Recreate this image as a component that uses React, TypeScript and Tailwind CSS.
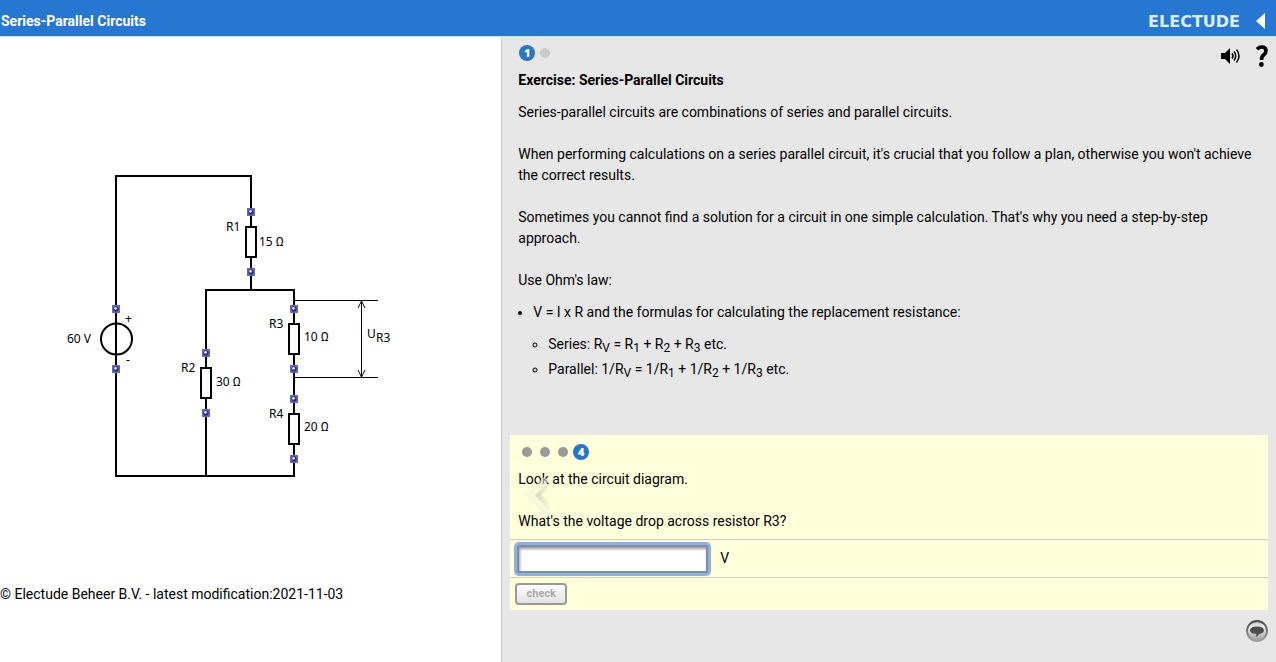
import { useState } from "react";
import type { ReactNode } from "react";

type Point = { x: number; y: number };

type Part = Point & { name: string; ohms: number; labelX: number; labelY: number };

const resistors: Part[] = [
  { name: "R1", ohms: 15, x: 251, y: 242, labelX: 259, labelY: 246 },
  { name: "R2", ohms: 30, x: 206, y: 383, labelX: 216, labelY: 386 },
  { name: "R3", ohms: 10, x: 294, y: 339, labelX: 304, labelY: 341 },
  { name: "R4", ohms: 20, x: 294, y: 429, labelX: 304, labelY: 431 },
];

function Terminal({ x, y }: Point) {
  return (
    <g>
      <rect x={x - 4} y={y - 4} width="8" height="8" fill="#6669b6" />
      <circle cx={x} cy={y} r="2.7" fill="#33336f" />
      <circle cx={x - 0.5} cy={y - 0.7} r="1.4" fill="#dcdff5" />
    </g>
  );
}

function Resistor({ x, y, name, ohms, labelX, labelY }: Part) {
  return (
    <g>
      <rect x={x - 5} y={y - 15} width="10" height="30" fill="#fff" stroke="#000" strokeWidth="2" />
      <Terminal x={x} y={y - 30} />
      <Terminal x={x} y={y + 30} />
      <text x={x - 25} y={y - 11}>
        {name}
      </text>
      <text x={labelX} y={labelY}>
        {ohms} <tspan className="font-[Roboto,sans-serif]">Ω</tspan>
      </text>
    </g>
  );
}

function CircuitDiagram() {
  return (
    <svg
      viewBox="0 37 500 547"
      className="h-[547px] w-[500px] max-w-none font-['Noto_Sans',sans-serif] text-xs"
      role="img"
      aria-label="Circuit diagram"
    >
      <g fill="none" stroke="#000" strokeWidth="2">
        <path d="M251 290V176H116V476H294V290H206V476" />
        <circle cx="116.500" cy="339" r="15.500" />
      </g>
      <g fill="none" stroke="#000" strokeWidth="1">
        <path d="M294 300.5H378M294 377.5H378M361.5 301V377" />
        <path d="M358 308L361.5 301L365 308M358 370L361.5 377L365 370" />
      </g>
      <Terminal x={116} y={309} />
      <Terminal x={116} y={369} />
      {resistors.map((r) => (
        <Resistor key={r.name} {...r} />
      ))}
      <text x="67" y="343">60 V</text>
      <text x="125" y="323">+</text>
      <text x="126" y="364">-</text>
      <text x="367" y="338">U</text>
      <text x="376" y="342">R3</text>
    </svg>
  );
}

function StepNumber({ children }: { children: ReactNode }) {
  return (
    <span className="flex size-4 items-center justify-center rounded-full bg-[#2a75c6] font-['Open_Sans',sans-serif] text-[11px] leading-4 font-extrabold text-white">
      {children}
    </span>
  );
}

function Sub({ children }: { children: ReactNode }) {
  return <span className="relative top-[3px] text-xs leading-none">{children}</span>;
}

function SpeakerIcon() {
  return (
    <svg viewBox="0 0 20 16" className="h-4 w-5">
      <path d="M0 5H4L9 0V16L4 11H0Z" />
      <g fill="none" stroke="#000" strokeWidth="1.5">
        <path d="M11 5.5Q13 8 11 10.5" />
        <path d="M13 3.5Q16.5 8 13 12.5" />
        <path d="M15.500 1.500Q20.500 8 15.500 14.500" />
      </g>
    </svg>
  );
}

function HelpIcon() {
  return (
    <svg viewBox="0 0 12 22" className="h-[22px] w-3">
      <path
        d="M1 4.200Q3 2 5.800 2Q10 2 10 5.800Q10 8 7.800 9.800Q5.500 11.500 5.500 15"
        fill="none"
        stroke="#000"
        strokeWidth="3.600"
      />
      <circle cx="5.400" cy="19.500" r="2.400" />
    </svg>
  );
}

function CommentIcon() {
  return (
    <svg viewBox="0 0 22 22" className="size-[22px]">
      <defs>
        <linearGradient id="ring" x1="0" y1="0" x2="0" y2="1">
          <stop offset="0" stopColor="#4a4a4a" />
          <stop offset="1" stopColor="#a0a0a0" />
        </linearGradient>
        <linearGradient id="face" x1="0" y1="0" x2="0" y2="1">
          <stop offset="0" stopColor="#b4b4b4" />
          <stop offset="0.3" stopColor="#f6f6f6" />
          <stop offset="0.55" stopColor="#d0d0d0" />
          <stop offset="1" stopColor="#9c9c9c" />
        </linearGradient>
      </defs>
      <circle cx="11" cy="11" r="10" fill="url(#face)" stroke="url(#ring)" strokeWidth="1.800" />
      <path
        d="M11 6.500C15 6.500 18 8 18 10.300C18 12.300 16 13.500 13 13.900Q12.500 16 9.800 17Q10.600 15.500 10.400 14C6.700 13.900 4 12.500 4 10.300C4 8 7 6.500 11 6.500Z"
        fill="#4d4d4d"
      />
    </svg>
  );
}

function PreviousIcon() {
  return (
    <svg viewBox="0 0 30 44" className="h-11 w-[30px]">
      <defs>
        <linearGradient id="shade" x1="0" y1="0" x2="1" y2="0">
          <stop offset="0" stopColor="#b0b098" stopOpacity="0.5" />
          <stop offset="1" stopColor="#b0b098" stopOpacity="0" />
        </linearGradient>
      </defs>
      <path d="M27 6L13 20L28 37L30 31L20 20L30 9Z" fill="url(#shade)" />
      <path d="M22 2L27 6L13 20L30 38L25 43L3 20Z" fill="#f2f2da" opacity="0.6" />
    </svg>
  );
}

export default function App() {
  const [answer, setAnswer] = useState("");

  return (
    <div className="flex min-h-screen flex-col bg-white font-[Roboto,sans-serif] text-sm leading-[21px] text-black">
      <header className="flex h-[37px] items-center justify-between border-b border-[#c9dff6] bg-[#2777d2] pt-1.5 pr-[11px] pl-px text-white">
        <h1 className="font-bold">Series-Parallel Circuits</h1>
        <div className="flex items-center gap-4">
          <span className="font-['DejaVu_Sans',sans-serif] text-base leading-[21px] font-bold text-[#dcefff]">
            ELECTUDE
          </span>
          <button type="button" aria-label="Open menu">
            <svg viewBox="0 0 9 16" className="h-4 w-[9px]">
              <path d="M9 0V16L0 8Z" fill="#fff" />
            </svg>
          </button>
        </div>
      </header>

      <div className="grid flex-1 grid-cols-[11fr_17fr]">
        <section className="overflow-hidden">
          <CircuitDiagram />
          <footer>© Electude Beheer B.V. - latest modification:2021-11-03</footer>
        </section>

        <main className="border-l border-[#c8c8c8] bg-[#e7e7e7] px-2 pt-2">
          <div className="flex h-[25px] items-start justify-between pl-[9px]">
            <div className="flex items-center gap-[5px]">
              <StepNumber>1</StepNumber>
              <span className="size-2.5 rounded-full bg-[#cacaca]" />
            </div>
            <div className="flex items-center gap-[15px]">
              <button type="button" aria-label="Read aloud">
                <SpeakerIcon />
              </button>
              <button type="button" aria-label="Help">
                <HelpIcon />
              </button>
            </div>
          </div>

          <div className="flex flex-col gap-[11px] px-2">
            <h2 className="font-bold">Exercise: Series-Parallel Circuits</h2>
            <p>
              Series-parallel circuits are combinations of series and parallel circuits.
              <br />
              <br />
              When performing calculations on a series parallel circuit, it's crucial that you
              follow a plan, otherwise you won't achieve the correct results.
              <br />
              <br />
              Sometimes you cannot find a solution for a circuit in one simple calculation. That's
              why you need a step-by-step approach.
              <br />
              <br />
              Use Ohm's law:
            </p>
            <ul className="list-disc pl-[15px]">
              <li>
                V = I x R and the formulas for calculating the replacement resistance:
                <ul className="mt-[11px] flex list-[circle] flex-col gap-1 pl-[15px]">
                  <li>
                    Series: R<Sub>V</Sub> = R<Sub>1</Sub> + R<Sub>2</Sub> + R<Sub>3</Sub> etc.
                  </li>
                  <li>
                    Parallel: 1/R<Sub>V</Sub> = 1/R<Sub>1</Sub> + 1/R<Sub>2</Sub> + 1/R
                    <Sub>3</Sub> etc.
                  </li>
                </ul>
              </li>
            </ul>
          </div>

          <form
            className="relative mt-[55px] bg-[#feffdb]"
            onSubmit={(e) => e.preventDefault()}
          >
            <div className="px-2 pt-[9px] pb-[7px]">
              <div className="flex items-center gap-2 pl-1">
                <span className="size-2.5 rounded-full bg-[#999]" />
                <span className="size-2.5 rounded-full bg-[#999]" />
                <span className="size-2.5 rounded-full bg-[#999]" />
                <span className="-ml-[3px]">
                  <StepNumber>4</StepNumber>
                </span>
              </div>
              <p className="mt-[9px]">
                Look at the circuit diagram.
                <br />
                <br />
                <label htmlFor="answer">What's the voltage drop across resistor R3?</label>
              </p>
            </div>
            <div className="flex h-[39px] items-center gap-3 border-y border-[#d0d0c4] pl-[7px]">
              <input
                id="answer"
                type="text"
                value={answer}
                onChange={(e) => setAnswer(e.target.value)}
                className="h-7 w-[191px] rounded-xs border-2 border-[#7e8da8] bg-white px-1 shadow-[inset_1px_2px_3px_#999] ring-3 ring-[#91b1dc] outline-none"
              />
              <span>V</span>
            </div>
            <div className="px-[5px] py-[5px]">
              <button
                type="submit"
                disabled={!answer}
                className="block h-[22px] w-[52px] rounded-sm border-2 border-[#999] bg-linear-to-b from-white to-[#e2e2e2] text-[11px] leading-4 font-bold text-[#aaa]"
              >
                check
              </button>
            </div>
            <button
              type="button"
              aria-label="Previous question"
              className="absolute top-10 left-3"
            >
              <PreviousIcon />
            </button>
          </form>

          <div className="mt-2.5 flex justify-end">
            <button type="button" aria-label="Send feedback">
              <CommentIcon />
            </button>
          </div>
        </main>
      </div>
    </div>
  );
}
